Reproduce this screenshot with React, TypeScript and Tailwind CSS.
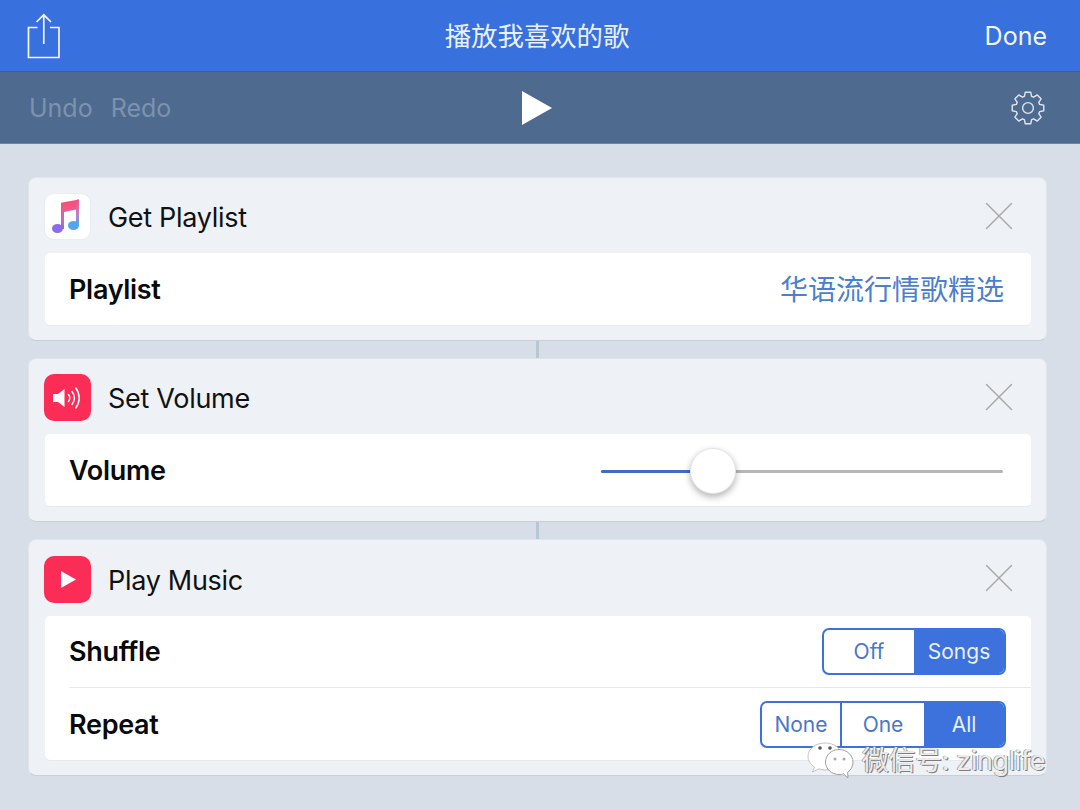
import React from 'react';
import { X } from 'lucide-react';

const FONT = "font-['Inter','Noto_Sans_CJK_SC',sans-serif]";

const ShareIcon = () => (
    <svg width="34" height="46" viewBox="0 0 34 46" fill="none" stroke="#f2f6fd" strokeWidth="1.7">
        <path d="M10.5 14.5H1.5V44.5H32V14.5H23" />
        <path d="M16.8 31V2" />
        <path d="M9.5 9L16.8 1.8L24 9" />
    </svg>
);

const gearPath = () => {
    const pts: string[] = [];
    const teeth = 8;
    for (let i = 0; i < teeth; i++) {
        const a = (i / teeth) * Math.PI * 2 - Math.PI / 2;
        const w = 0.2;
        const spots: [number, number][] = [
            [12.2, a - w * 1.5],
            [16, a - w * 0.85],
            [16, a + w * 0.85],
            [12.2, a + w * 1.5],
        ];
        spots.forEach(([r, t]) => {
            pts.push(`${(17 + r * Math.cos(t)).toFixed(2)} ${(17 + r * Math.sin(t)).toFixed(2)}`);
        });
    }
    return 'M' + pts.join('L') + 'Z';
};

const GearIcon = () => (
    <svg width="34" height="34" viewBox="0 0 34 34" fill="none" stroke="#dfe6f0" strokeWidth="1.4" strokeLinejoin="round">
        <path d={gearPath()} />
        <circle cx="17" cy="17" r="5.4" />
    </svg>
);

const MusicIcon = () => (
    <div className="w-[47px] h-[47px] rounded-[10px] bg-white border border-[#e9edf3] flex items-center justify-center">
        <svg width="32" height="38" viewBox="0 0 32 38">
            <defs>
                <linearGradient id="note" x1="0" y1="0" x2="0" y2="1">
                    <stop offset="0" stopColor="#fa4b6c" />
                    <stop offset="0.35" stopColor="#ee5a8c" />
                    <stop offset="0.7" stopColor="#b56fd0" />
                    <stop offset="1" stopColor="#8a6cec" />
                </linearGradient>
                <linearGradient id="note2" x1="0" y1="0" x2="0" y2="1">
                    <stop offset="0" stopColor="#f5527a" />
                    <stop offset="0.5" stopColor="#c87ac0" />
                    <stop offset="1" stopColor="#52a6ea" />
                </linearGradient>
            </defs>
            <path d="M9 4.7L27 1.5V11L12 14V31H9Z" fill="url(#note)" />
            <path d="M24 2L27 1.5V27.5H24Z" fill="url(#note2)" />
            <ellipse cx="5.5" cy="30.5" rx="5.5" ry="4.6" fill="#8a6cec" />
            <ellipse cx="21.5" cy="27.5" rx="5.5" ry="4.6" fill="#52a6ea" />
        </svg>
    </div>
);

const VolumeIcon = () => (
    <div className="w-[47px] h-[47px] rounded-[10px] bg-[#fb2c56] flex items-center justify-center">
        <svg width="32" height="26" viewBox="0 0 32 26" fill="none" stroke="#fff" strokeWidth="1.5" strokeLinecap="round">
            <path d="M1 9H6L12.5 4V22L6 17H1Z" fill="#fff" stroke="none" />
            <path d="M16.5 9.5C18 11.5 18 14.5 16.5 16.5" />
            <path d="M20 6.5C23 10.5 23 15.5 20 19.5" />
            <path d="M23.8 3C28.3 9 28.3 17 23.8 23" />
        </svg>
    </div>
);

const PlayIcon = () => (
    <div className="w-[47px] h-[47px] rounded-[10px] bg-[#fb2c56] flex items-center justify-center">
        <svg className="ml-[2px]" width="15" height="17" viewBox="0 0 15 17">
            <path d="M0 0L15 8.5L0 17Z" fill="#fff" />
        </svg>
    </div>
);

const Connector = () => (
    <div className="h-[17px] flex justify-center">
        <div className="w-[3px] h-full bg-[#b9c6d4]" />
    </div>
);

const Card: React.FC<{ icon: React.ReactNode; title: string; head?: string; children: React.ReactNode }> = ({ icon, title, head = 'h-[75px]', children }) => (
    <div className="bg-[#eef2f7] rounded-[8px] border border-[#e0e5ec] border-b-[#c8cfd9] pl-[16px] pr-[15px] pb-[15px]">
        <div className={`${head} pt-[2px] flex items-center -ml-[1px]`}>
            {icon}
            <span className="ml-[17px] pt-[4px] text-[27px] tracking-[-0.3px] text-[#111]">{title}</span>
            <X className="ml-auto mr-[7px] -mt-[2px]" size={50} strokeWidth={0.7} color="#a9a9a9" />
        </div>
        <div className="bg-white rounded-[5px] shadow-[0_1px_0_#e6eaf0]">{children}</div>
    </div>
);

const Row: React.FC<{ label: string; divider?: boolean; children: React.ReactNode }> = ({ label, divider, children }) => (
    <div className={`ml-[24px] h-[72px] flex items-center justify-between pr-[25px] ${divider ? 'border-b border-[#e8e8ea]' : ''}`}>
        <span className="pt-[2px] text-[27px] font-semibold tracking-[-0.3px] text-[#0a0a0a]">{label}</span>
        {children}
    </div>
);

const Segmented: React.FC<{ items: { label: string; w: string; on?: boolean }[] }> = ({ items }) => (
    <div className="flex h-[47px] rounded-[7px] border-2 border-[#3d72dc] overflow-hidden">
        {items.map((it, i) => (
            <div
                key={it.label}
                className={`${it.w} pt-[1px] flex items-center justify-center text-[21px] ${it.on ? 'bg-[#3d72dc] text-[#e9f0fc]' : 'text-[#4a77c9]'} ${i > 0 && !it.on ? 'border-l-2 border-[#3d72dc]' : ''}`}
            >
                {it.label}
            </div>
        ))}
    </div>
);

const Watermark = () => (
    <div className="absolute left-[807px] top-[741px] flex items-center gap-[5px] text-[27px] tracking-[-0.4px] text-[#ececec] [text-shadow:1px_1px_0_#7d7d7d,-1px_0_0_#a5a5a5]">
        <svg width="50" height="38" viewBox="0 0 50 38" fill="#fff" stroke="#c4c4c4" strokeWidth="1">
            <path d="M18 1C8.5 1 1 7 1 14.5C1 18.8 3.5 22.5 7.5 25L5.5 30L12 26.8C14 27.6 16 28 18 28C27.5 28 35 22 35 14.5C35 7 27.5 1 18 1Z" />
            <circle cx="13" cy="6" r="1.8" fill="#555" stroke="none" />
            <circle cx="23" cy="6" r="1.8" fill="#555" stroke="none" />
            <path stroke="#a0a0a0" d="M32 7.5C24.5 7.5 18.5 13 18.5 20C18.5 27 24.5 32.5 32 32.5C33.6 32.5 35.2 32.2 36.6 31.8L41 36L40.6 30.4C44 28 46 24.2 46 20C46 13 39.5 7.5 32 7.5Z" />
            <circle cx="28" cy="17" r="1.5" fill="#aaa" stroke="none" />
            <circle cx="37" cy="17" r="1.5" fill="#aaa" stroke="none" />
        </svg>
        <span>微信号: zinglife</span>
    </div>
);

const App: React.FC = () => {
    return (
        <div className={`relative w-[1080px] h-[810px] overflow-hidden bg-[#d7dee8] ${FONT}`}>
            <div className="h-[72px] bg-[#3870dd] border-b border-[#2f5fb8] grid grid-cols-[1fr_auto_1fr] items-center pl-[27px] pr-[33px]">
                <ShareIcon />
                <span className="pt-[2px] text-[26.4px] text-[#eaf0fb]">播放我喜欢的歌</span>
                <span className="justify-self-end pt-[3px] text-[25px] text-[#f2f6fd]">Done</span>
            </div>
            <div className="h-[72px] bg-[#4e6a8f] border-b border-[#6c86a8] grid grid-cols-[1fr_auto_1fr] items-center pl-[29px] pr-[35px]">
                <div className="flex gap-[18px] pt-[2px] text-[25px] text-[#7d92ae] whitespace-nowrap">
                    <span>Undo</span>
                    <span>Redo</span>
                </div>
                <svg width="30" height="34" viewBox="0 0 30 34">
                    <path d="M0 0L30 17L0 34Z" fill="#fff" />
                </svg>
                <div className="justify-self-end">
                    <GearIcon />
                </div>
            </div>
            <div className="pt-[33px] pl-[28px] pr-[33px]">
                <Card icon={<MusicIcon />} title="Get Playlist">
                    <Row label="Playlist">
                        <span className="mr-[2px] pt-[2px] text-[28px] text-[#4a80cf]">华语流行情歌精选</span>
                    </Row>
                </Card>
                <Connector />
                <Card icon={<VolumeIcon />} title="Set Volume">
                    <Row label="Volume">
                        <div className="relative mr-[3px] mt-[2px] w-[402px] h-[3px] bg-[#b7b7b7] rounded-full">
                            <div className="w-[100px] h-full bg-[#3f6cc9] rounded-full" />
                            <div className="absolute left-[89px] top-[-22px] w-[46px] h-[46px] rounded-full bg-white shadow-[0_3px_7px_rgba(0,0,0,0.3)] border border-[#e4e4e4]" />
                        </div>
                    </Row>
                </Card>
                <Connector />
                <Card icon={<PlayIcon />} title="Play Music" head="h-[76px]">
                    <Row label="Shuffle" divider>
                        <Segmented
                            items={[
                                { label: 'Off', w: 'w-[90px]' },
                                { label: 'Songs', w: 'w-[90px]', on: true },
                            ]}
                        />
                    </Row>
                    <Row label="Repeat">
                        <Segmented
                            items={[
                                { label: 'None', w: 'w-[78px]' },
                                { label: 'One', w: 'w-[84px]' },
                                { label: 'All', w: 'w-[80px]', on: true },
                            ]}
                        />
                    </Row>
                </Card>
            </div>
            <Watermark />
        </div>
    );
};

export default App;
